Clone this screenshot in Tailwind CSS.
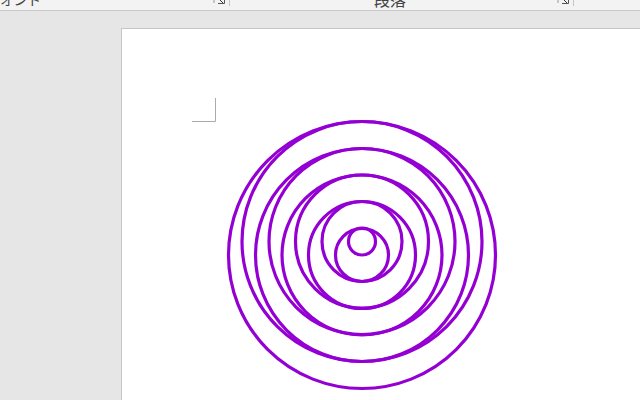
<!DOCTYPE html>
<html>
<head>
<meta charset="utf-8">
<script src="https://cdn.jsdelivr.net/npm/@tailwindcss/browser@4"></script>
</head>
<body class="m-0 w-[640px] h-[400px] overflow-hidden bg-[#e6e6e6]" style="font-family:'Noto Sans CJK JP','Liberation Sans',sans-serif">
<div class="h-[10px] bg-[#f3f3f3] border-b border-[#c9c9c9] box-content relative overflow-hidden">
  <span class="absolute left-[0px] top-[-11px] text-[14px] leading-[20px] tracking-[-0.5px] text-[#444]">オント</span>
  <span class="absolute left-[374px] top-[-11px] text-[16px] leading-[20px] text-[#444]">段落</span>
  <svg class="absolute left-[213px] top-0" width="12" height="6" fill="none">
    <path d="M1 0V3" stroke="#999"/>
    <path d="M5 3.5H11.5V0" stroke="#555"/>
    <path d="M7 0L10 3" stroke="#333"/>
  </svg>
  <svg class="absolute left-[557px] top-0" width="12" height="6" fill="none">
    <path d="M1 0V3" stroke="#999"/>
    <path d="M5 3.5H11.5V0" stroke="#555"/>
    <path d="M7 0L10 3" stroke="#333"/>
  </svg>
  <div class="absolute left-[229px] top-0 h-[6px] w-px bg-[#c6c6c6]"></div>
  <div class="absolute left-[573px] top-0 h-[6px] w-px bg-[#c6c6c6]"></div>
</div>
<div class="pl-[121px] pt-[17px]">
  <div class="relative w-[519px] h-[372px] bg-white border-t border-l border-[#c6c6c6]">
    <svg class="absolute left-[-122px] top-[-29px]" width="640" height="400" fill="none">
      <path d="M192 121.5H215.5V98" stroke="#ababab" stroke-width="1"/>
      <g stroke="#9400d3" stroke-width="3.2">
        <circle cx="362" cy="255" r="133.5"/>
        <circle cx="362" cy="241.5" r="120"/>
        <circle cx="362" cy="255" r="106.5"/>
        <circle cx="362" cy="241.5" r="93"/>
        <circle cx="362" cy="255" r="80"/>
        <circle cx="362" cy="241.5" r="66.5"/>
        <circle cx="362" cy="255" r="53.5"/>
        <circle cx="362" cy="241.5" r="40"/>
        <circle cx="362" cy="255" r="26.5"/>
        <circle cx="362" cy="241.5" r="13.5"/>
      </g>
    </svg>
  </div>
</div>
</body>
</html>
